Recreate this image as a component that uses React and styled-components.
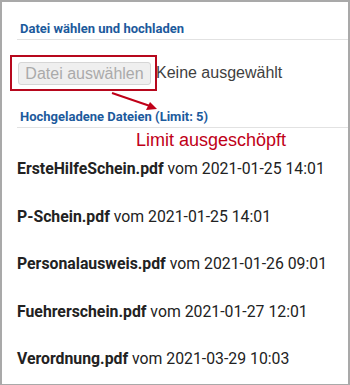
import styled, { createGlobalStyle } from "styled-components";

const Global = createGlobalStyle`
  html, body { margin: 0; padding: 0; background: #fff; }
  body { font-family: Roboto, "Liberation Sans", sans-serif; }
`;

const Frame = styled.div`
  position: relative;
  width: 350px;
  height: 385px;
  box-sizing: border-box;
  border: 2px solid #a9a9a9;
  border-bottom-width: 1px;
  padding-top: 19px;
  overflow: hidden;
`;

const Heading = styled.div`
  margin-left: 15px;
  padding: 0 0 3px 3px;
  border-bottom: 1px solid #e2e2e2;
  color: #1c5a9c;
  font-size: 13px;
  font-weight: 700;
  line-height: 15px;
`;

const PickerRow = styled.div`
  display: flex;
  align-items: center;
  margin: 15px 0 0 8px;
  height: 36px;
`;

const Highlight = styled.div`
  display: flex;
  align-items: center;
  box-sizing: border-box;
  width: 147px;
  height: 36px;
  border: 2px solid #b7081d;
  padding-left: 6px;
`;

const FileButton = styled.button`
  box-sizing: border-box;
  width: 133px;
  height: 23px;
  padding: 0;
  border: 1px solid #d6d6d6;
  border-radius: 3px;
  background: #efefef;
  color: #aaaaaa;
  font-family: "Liberation Sans", Arial, sans-serif;
  font-size: 16px;
  line-height: 21px;
`;

const NoneText = styled.span`
  margin-left: -1px;
  color: #3f3f3f;
  font-family: "Liberation Sans", Arial, sans-serif;
  font-size: 16px;
`;

const UploadHeading = styled(Heading)`
  margin-top: 18px;
`;

const LimitNote = styled.div`
  padding-left: 134px;
  margin-top: 2px;
  color: #c00018;
  font-family: "Liberation Sans", Arial, sans-serif;
  font-size: 18px;
  line-height: 20px;
`;

const FileList = styled.ul`
  list-style: none;
  margin: 9px 0 0 0;
  padding: 0 0 0 15px;
  display: flex;
  flex-direction: column;
  gap: 28.5px;
`;

const FileItem = styled.li`
  color: #222;
  font-size: 15.8px;
  line-height: 19px;
`;

const FileName = styled.b`
  font-weight: 700;
`;

const Arrow = styled.svg`
  position: absolute;
  left: 106px;
  top: 88px;
`;

const files = [
  ["ErsteHilfeSchein.pdf", "2021-01-25 14:01"],
  ["P-Schein.pdf", "2021-01-25 14:01"],
  ["Personalausweis.pdf", "2021-01-26 09:01"],
  ["Fuehrerschein.pdf", "2021-01-27 12:01"],
  ["Verordnung.pdf", "2021-03-29 10:03"],
];

export default function App() {
  return (
    <>
      <Global />
      <Frame>
        <Heading>Datei wählen und hochladen</Heading>
        <PickerRow>
          <Highlight>
            <FileButton disabled>Datei auswählen</FileButton>
          </Highlight>
          <NoneText>Keine ausgewählt</NoneText>
        </PickerRow>
        <UploadHeading>Hochgeladene Dateien (Limit: 5)</UploadHeading>
        <LimitNote>Limit ausgeschöpft</LimitNote>
        <FileList>
          {files.map(([name, date]) => (
            <FileItem key={name}>
              <FileName>{name}</FileName> vom {date}
            </FileItem>
          ))}
        </FileList>
        <Arrow width="60" height="24" viewBox="0 0 60 24">
          <line x1="4" y1="3" x2="42" y2="16" stroke="#c00018" strokeWidth="2" />
          <polygon points="49,19 38,20 42,12" fill="#c00018" />
        </Arrow>
      </Frame>
    </>
  );
}
